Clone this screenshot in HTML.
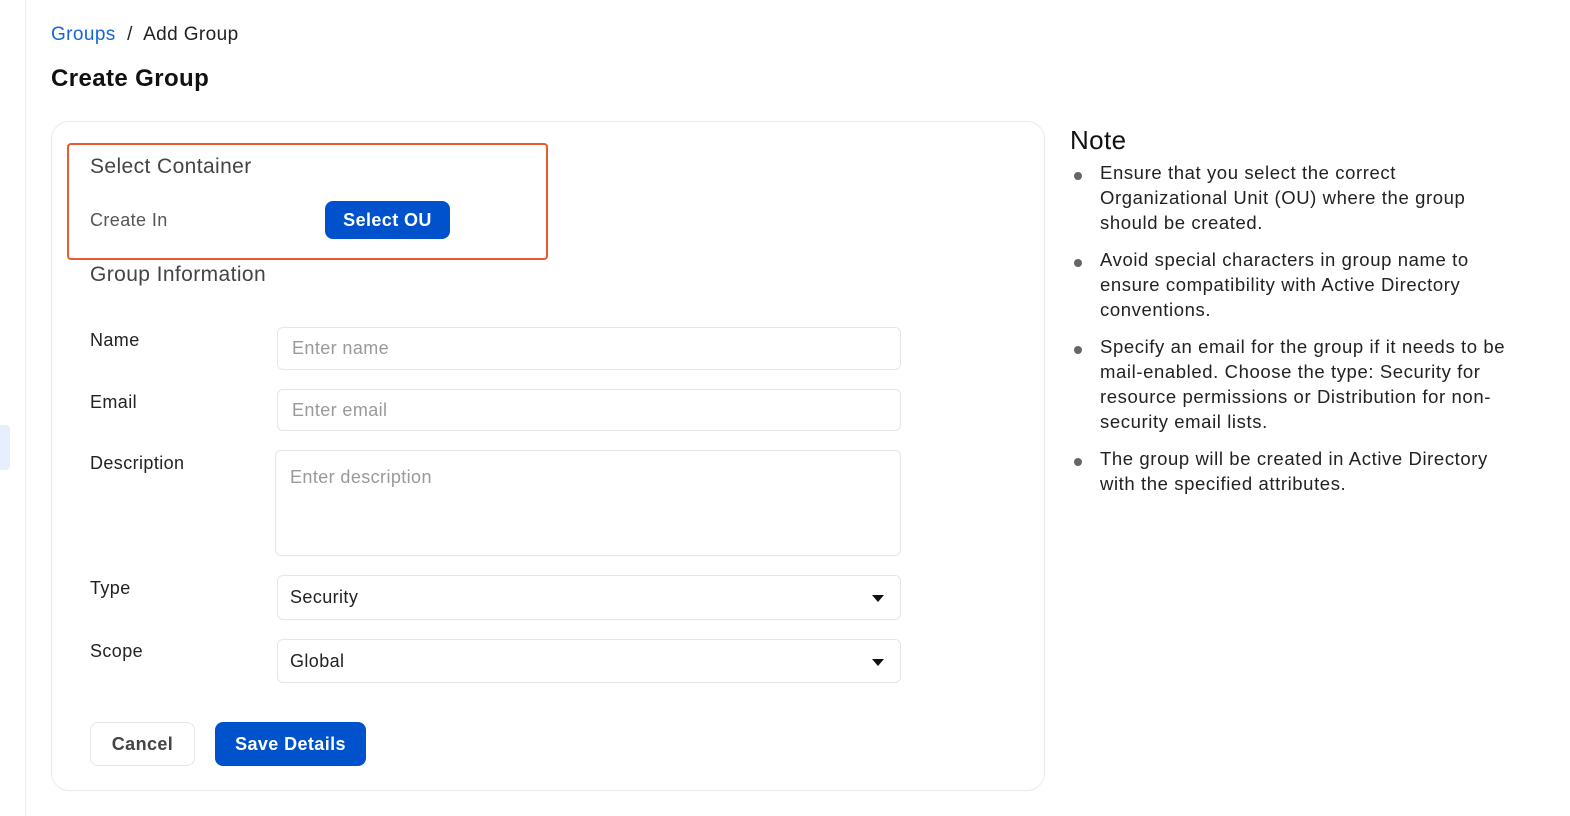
<!DOCTYPE html>
<html><head><style>
*{box-sizing:border-box;margin:0;padding:0}
body{width:1570px;height:816px;background:#fff;font-family:"Liberation Sans",sans-serif;position:relative;overflow:hidden;color:#222;letter-spacing:0.4px}
.abs{position:absolute}
.vline{left:25px;top:0;width:1px;height:816px;background:#ececec}
.tab{left:0;top:425px;width:10px;height:45px;background:#e6efff;border-radius:0 4px 4px 0}
.card{left:51px;top:121px;width:994px;height:670px;border:1px solid #eaeaea;border-radius:18px}
.red{left:67px;top:143px;width:481px;height:117px;border:2px solid #ea5a2e;border-radius:4px}
.lbl{font-size:18px;color:#222}
.inp{border:1px solid #e6e6e6;border-radius:6px;left:277px;width:624px;font-size:18px;color:#999;padding-left:14px}
.btn{background:#0052cc;color:#fff;font-weight:bold;font-size:18px;border-radius:8px;text-align:center}
.note li{list-style:none;position:relative;padding-left:30px;font-size:18.5px;line-height:25px;color:#222;margin-bottom:12px;white-space:nowrap;letter-spacing:0.6px}
.note li:before{content:"";position:absolute;left:4px;top:12px;width:8px;height:8px;border-radius:50%;background:#666}
.arrow{position:absolute;right:16px;top:19px;width:0;height:0;border-left:6px solid transparent;border-right:6px solid transparent;border-top:7px solid #111}
</style></head><body>
<div class="abs vline"></div>
<div class="abs tab"></div>
<div class="abs" style="left:51px;top:24px;font-size:19px"><span style="color:#1565d8">Groups</span> &nbsp;/&nbsp; Add Group</div>
<div class="abs" style="left:51px;top:65px;font-size:24px;font-weight:bold;color:#111">Create Group</div>
<div class="abs card"></div>
<div class="abs red"></div>
<div class="abs" style="left:90px;top:155px;font-size:21px;color:#444">Select Container</div>
<div class="abs" style="left:90px;top:210px;font-size:18px;color:#555">Create In</div>
<div class="abs btn" style="left:325px;top:201px;width:125px;height:38px;line-height:38px">Select OU</div>
<div class="abs" style="left:90px;top:263px;font-size:21px;color:#444">Group Information</div>
<div class="abs lbl" style="left:90px;top:330px">Name</div>
<div class="abs inp" style="top:327px;height:43px;line-height:41px">Enter name</div>
<div class="abs lbl" style="left:90px;top:392px">Email</div>
<div class="abs inp" style="top:389px;height:42px;line-height:40px">Enter email</div>
<div class="abs lbl" style="left:90px;top:453px">Description</div>
<div class="abs inp" style="left:275px;width:626px;top:450px;height:106px;padding-top:14px;line-height:24px">Enter description</div>
<div class="abs lbl" style="left:90px;top:578px">Type</div>
<div class="abs inp" style="top:575px;height:45px;line-height:43px;color:#222;padding-left:12px">Security<div class="arrow"></div></div>
<div class="abs lbl" style="left:90px;top:641px">Scope</div>
<div class="abs inp" style="top:639px;height:44px;line-height:42px;color:#222;padding-left:12px">Global<div class="arrow"></div></div>
<div class="abs" style="left:90px;top:722px;width:105px;height:44px;line-height:42px;border:1px solid #e6e6e6;border-radius:8px;text-align:center;font-weight:bold;font-size:18px;color:#444">Cancel</div>
<div class="abs btn" style="left:215px;top:722px;width:151px;height:44px;line-height:44px">Save Details</div>
<div class="abs" style="left:1070px;top:125px;font-size:26px;color:#111">Note</div>
<ul class="abs note" style="left:1070px;top:160px;width:460px">
<li>Ensure that you select the correct<br>Organizational Unit (OU) where the group<br>should be created.</li>
<li>Avoid special characters in group name to<br>ensure compatibility with Active Directory<br>conventions.</li>
<li>Specify an email for the group if it needs to be<br>mail-enabled. Choose the type: Security for<br>resource permissions or Distribution for non-<br>security email lists.</li>
<li>The group will be created in Active Directory<br>with the specified attributes.</li>
</ul>
</body></html>
